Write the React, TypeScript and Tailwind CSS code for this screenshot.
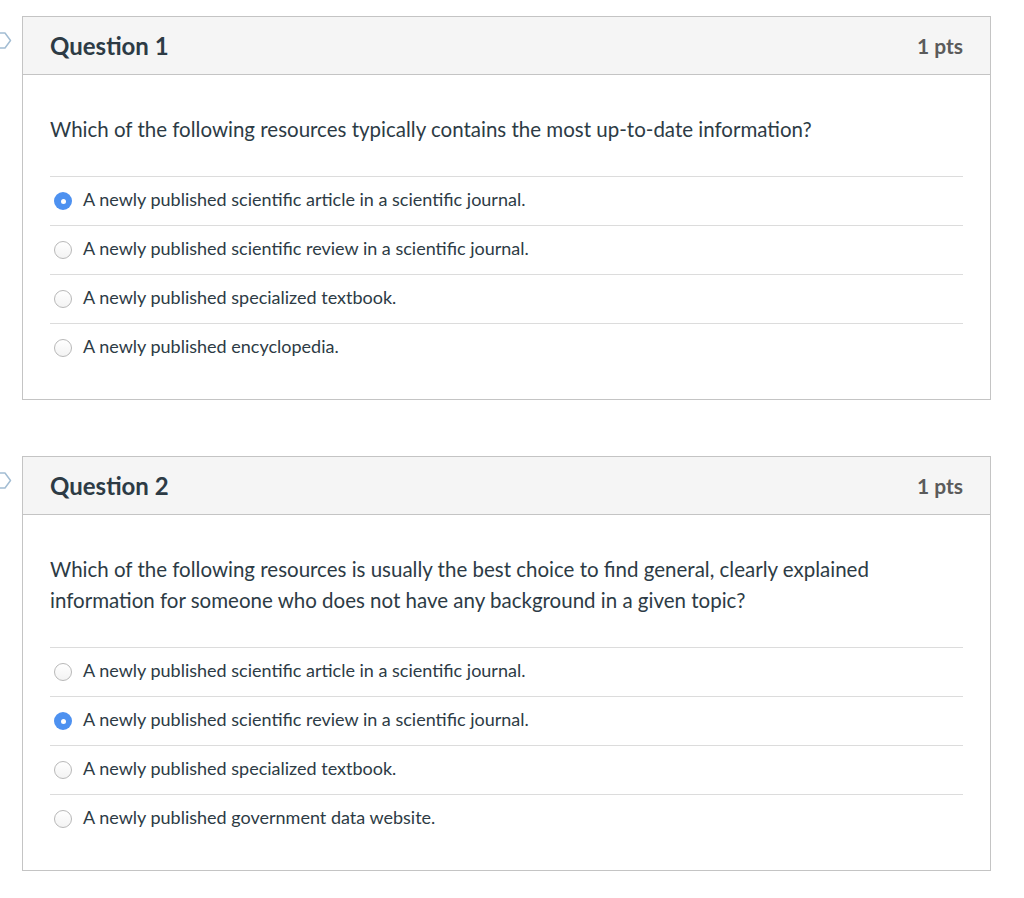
import React from 'react';

type Question = {
  title: string;
  points: string;
  text: string;
  options: string[];
  selected: number;
};

const questions: Question[] = [
  {
    title: 'Question 1',
    points: '1 pts',
    text: 'Which of the following resources typically contains the most up-to-date information?',
    options: [
      'A newly published scientific article in a scientific journal.',
      'A newly published scientific review in a scientific journal.',
      'A newly published specialized textbook.',
      'A newly published encyclopedia.',
    ],
    selected: 0,
  },
  {
    title: 'Question 2',
    points: '1 pts',
    text: 'Which of the following resources is usually the best choice to find general, clearly explained information for someone who does not have any background in a given topic?',
    options: [
      'A newly published scientific article in a scientific journal.',
      'A newly published scientific review in a scientific journal.',
      'A newly published specialized textbook.',
      'A newly published government data website.',
    ],
    selected: 1,
  },
];

function Bookmark() {
  return (
    <svg width="12" height="17" viewBox="0 0 12 17" className="block overflow-hidden">
      <path
        d="M-8 1 H5 L10.5 8.5 L5 16 H-8"
        fill="none"
        stroke="#a3bdd3"
        strokeWidth="1.5"
        strokeLinejoin="round"
      />
    </svg>
  );
}

function Radio({ checked }: { checked: boolean }) {
  if (checked) {
    return (
      <span className="flex h-[18px] w-[18px] shrink-0 items-center justify-center rounded-full bg-[#4d91f0]">
        <span className="h-[5px] w-[5px] rounded-full bg-white" />
      </span>
    );
  }
  return (
    <span className="h-[18px] w-[18px] shrink-0 rounded-full border border-[#b8b8b8] bg-gradient-to-b from-white to-[#f3f3f3]" />
  );
}

function QuestionCard({ q }: { q: Question }) {
  return (
    <div className="flex">
      <div className="w-[22px] pt-[16px]">
        <Bookmark />
      </div>
      <div className="w-[969px] border border-[#c4c4c4] bg-white">
        <div className="flex h-[58px] items-center justify-between border-b border-[#c4c4c4] bg-[#f5f5f5] px-[27px]">
          <h2 className="text-[24px] font-bold text-[#2d3b45]">{q.title}</h2>
          <span className="text-[21px] font-bold text-[#5b5b5b]">{q.points}</span>
        </div>
        <div className="px-[27px] pb-[27px]">
          <p className="pt-[39px] pb-[31px] text-[20.5px] leading-[31px] text-[#2d3b45]">{q.text}</p>
          {q.options.map((opt, i) => (
            <div key={opt} className="flex h-[49px] items-center gap-[11px] border-t border-[#dcdcdc] pl-[4px]">
              <Radio checked={i === q.selected} />
              <span className="mb-[4px] text-[18px] text-[#2d3b45]">{opt}</span>
            </div>
          ))}
        </div>
      </div>
    </div>
  );
}

export default function App() {
  return (
    <div
      className="flex min-h-[898px] flex-col gap-[56px] bg-white pt-[16px]"
      style={{ fontFamily: 'Lato, "Open Sans", sans-serif' }}
    >
      {questions.map((q) => (
        <QuestionCard key={q.title} q={q} />
      ))}
    </div>
  );
}
